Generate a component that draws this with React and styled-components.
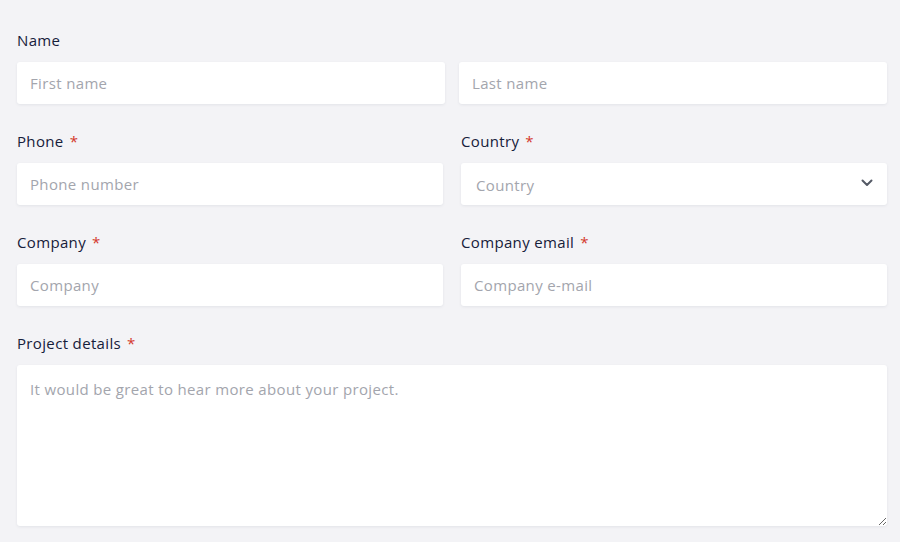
import React from "react";
import styled, { createGlobalStyle } from "styled-components";

const Global = createGlobalStyle`
  html, body { margin: 0; padding: 0; background: #f3f3f6; }
  body { font-family: "Open Sans", "Noto Sans", sans-serif; }
  * { box-sizing: border-box; }
`;

const Form = styled.form`
  padding: 30px 13px 16px 17px;
  display: flex;
  flex-direction: column;
  gap: 27px;
`;

const Row = styled.div`
  display: grid;
  grid-template-columns: 1fr 1fr;
  column-gap: ${(p) => p.$gap}px;
`;

const Field = styled.div`
  display: flex;
  flex-direction: column;
  gap: 12px;
`;

const Label = styled.label`
  font-size: 15px;
  letter-spacing: 0.35px;
  line-height: 20px;
  font-weight: 500;
  color: #16203a;
  height: 20px;
`;

const Star = styled.span`
  color: #d4372c;
  margin-left: 6px;
`;

const Input = styled.input`
  height: 42px;
  width: 100%;
  border: none;
  outline: none;
  border-radius: 3px;
  background: #fff;
  box-shadow: 0 1px 3px rgba(40, 45, 80, 0.08);
  padding: 0 13px;
  font-family: inherit;
  font-size: 15px;
  letter-spacing: 0.35px;
  color: #1c2640;
  &::placeholder { color: #a3a5ad; }
`;

const SelectBox = styled.div`
  position: relative;
  height: 42px;
  border-radius: 3px;
  background: #fff;
  box-shadow: 0 1px 3px rgba(40, 45, 80, 0.08);
  display: flex;
  align-items: center;
  justify-content: space-between;
  padding: 2px 14px 0 15px;
  font-size: 15px;
  letter-spacing: 0.35px;
  color: #a3a5ad;
`;

const Chevron = styled.svg`
  width: 12px;
  height: 8px;
  margin-top: -4px;
`;

const TextArea = styled.textarea`
  height: 161px;
  width: 100%;
  resize: vertical;
  border: none;
  outline: none;
  border-radius: 3px;
  background: #fff;
  box-shadow: 0 1px 3px rgba(40, 45, 80, 0.08);
  padding: 14px 13px;
  font-family: inherit;
  font-size: 15px;
  letter-spacing: 0.35px;
  line-height: 20px;
  color: #1c2640;
  display: block;
  &::placeholder { color: #a3a5ad; }
`;

export default function App() {
  return (
    <>
      <Global />
      <Form onSubmit={(e) => e.preventDefault()}>
        <Field>
          <Label>Name</Label>
          <Row $gap={14}>
            <Input placeholder="First name" />
            <Input placeholder="Last name" />
          </Row>
        </Field>
        <Row $gap={18}>
          <Field>
            <Label>Phone<Star>*</Star></Label>
            <Input placeholder="Phone number" />
          </Field>
          <Field>
            <Label>Country<Star>*</Star></Label>
            <SelectBox>
              <span>Country</span>
              <Chevron viewBox="0 0 12 8">
                <path d="M1.5 1.5 L6 6 L10.5 1.5" fill="none" stroke="#555a66" strokeWidth="2" strokeLinecap="round" strokeLinejoin="round" />
              </Chevron>
            </SelectBox>
          </Field>
        </Row>
        <Row $gap={18}>
          <Field>
            <Label>Company<Star>*</Star></Label>
            <Input placeholder="Company" />
          </Field>
          <Field>
            <Label>Company email<Star>*</Star></Label>
            <Input placeholder="Company e-mail" />
          </Field>
        </Row>
        <Field>
          <Label>Project details<Star>*</Star></Label>
          <TextArea placeholder="It would be great to hear more about your project." />
        </Field>
      </Form>
    </>
  );
}
